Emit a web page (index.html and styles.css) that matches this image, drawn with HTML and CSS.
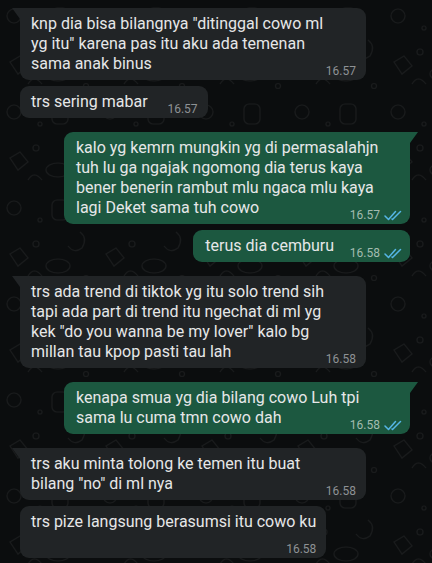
FILE: index.html
```html
<!DOCTYPE html>
<html lang="id">
<head>
<meta charset="utf-8">
<title>Chat</title>
<link rel="stylesheet" href="styles.css">
</head>
<body>
<div class="chat">
  <div class="msg in tail full">
    <span class="text">knp dia bisa bilangnya "ditinggal cowo ml<br>yg itu" karena pas itu aku ada temenan<br>sama anak binus</span><span class="spacer"></span>
    <span class="meta"><span class="time">16.57</span></span>
  </div>
  <div class="msg in">
    <span class="text">trs sering mabar</span><span class="spacer"></span>
    <span class="meta"><span class="time">16.57</span></span>
  </div>
  <div class="msg out tail full">
    <span class="text">kalo yg kemrn mungkin yg di permasalahjn<br>tuh lu ga ngajak ngomong dia terus kaya<br>bener benerin rambut mlu ngaca mlu kaya<br>lagi Deket sama tuh cowo</span><span class="spacer"></span>
    <span class="meta"><span class="time">16.57</span><svg class="ticks" viewBox="0 0 18 11" width="18" height="11"><path d="M1 6 L4.5 9.5 L11.5 1.5 M8 9 L8.5 9.5 L16.5 1.5"/></svg></span>
  </div>
  <div class="msg out">
    <span class="text">terus dia cemburu</span><span class="spacer"></span>
    <span class="meta"><span class="time">16.58</span><svg class="ticks" viewBox="0 0 18 11" width="18" height="11"><path d="M1 6 L4.5 9.5 L11.5 1.5 M8 9 L8.5 9.5 L16.5 1.5"/></svg></span>
  </div>
  <div class="msg in tail full">
    <span class="text">trs ada trend di tiktok yg itu solo trend sih<br>tapi ada part di trend itu ngechat di ml yg<br>kek "do you wanna be my lover" kalo bg<br>millan tau kpop pasti tau lah</span><span class="spacer"></span>
    <span class="meta"><span class="time">16.58</span></span>
  </div>
  <div class="msg out tail full">
    <span class="text">kenapa smua yg dia bilang cowo Luh tpi<br>sama lu cuma tmn cowo dah</span><span class="spacer"></span>
    <span class="meta"><span class="time">16.58</span><svg class="ticks" viewBox="0 0 18 11" width="18" height="11"><path d="M1 6 L4.5 9.5 L11.5 1.5 M8 9 L8.5 9.5 L16.5 1.5"/></svg></span>
  </div>
  <div class="msg in tail full">
    <span class="text">trs aku minta tolong ke temen itu buat<br>bilang "no" di ml nya</span><span class="spacer"></span>
    <span class="meta"><span class="time">16.58</span></span>
  </div>
  <div class="msg in">
    <span class="text">trs pize langsung berasumsi itu cowo ku</span><span class="spacer block"></span>
    <span class="meta"><span class="time">16.58</span></span>
  </div>
</div>
</body>
</html>
```
FILE: styles.css
```css
* { box-sizing: border-box; }

html, body {
  margin: 0;
  padding: 0;
}

body {
  width: 432px;
  height: 563px;
  overflow: hidden;
  background-color: #0b0d0e;
  background-image: url("data:image/svg+xml,%3Csvg xmlns='http://www.w3.org/2000/svg' width='96' height='96' viewBox='0 0 96 96'%3E%3Cg fill='none' stroke='%23ffffff' stroke-opacity='0.06' stroke-width='1.2'%3E%3Ccircle cx='14' cy='16' r='7'/%3E%3Crect x='52' y='8' width='16' height='20' rx='5'/%3E%3Cpath d='M80 40 q8 6 2 16 q-8 6 -14 -2'/%3E%3Ccircle cx='36' cy='52' r='3'/%3E%3Cpath d='M10 62 l10 -6 l8 10 l-10 8 z'/%3E%3Cellipse cx='58' cy='74' rx='12' ry='7'/%3E%3Ccircle cx='86' cy='86' r='2.5'/%3E%3Cpath d='M28 84 q6 -10 14 0'/%3E%3Ccircle cx='40' cy='28' r='2'/%3E%3C/g%3E%3C/svg%3E");
  background-size: 96px 96px;
  font-family: Roboto, "Noto Sans", "Liberation Sans", sans-serif;
}

.chat {
  display: flex;
  flex-direction: column;
  padding: 8px 22px 0 20px;
}

.msg {
  position: relative;
  max-width: 346px;
  padding: 6px 10px 6px 11px;
  border-radius: 9px;
  font-size: 16px;
  line-height: 20px;
  color: #e6e7e8;
}

.msg + .msg { margin-top: 6px; }
.msg.tail:not(:first-child) { margin-top: 14px; }

.in {
  align-self: flex-start;
  background: #212426;
}

.out {
  align-self: flex-end;
  background: #1c5840;
  padding-left: 12px;
}

.full { width: 346px; }

.in.tail { border-top-left-radius: 0; }
.out.tail { border-top-right-radius: 0; }

.in.tail::before {
  content: "";
  position: absolute;
  top: 0;
  left: -8px;
  width: 0;
  height: 0;
  border-top: 11px solid #212426;
  border-left: 8px solid transparent;
}

.out.tail::before {
  content: "";
  position: absolute;
  top: 0;
  right: -8px;
  width: 0;
  height: 0;
  border-top: 11px solid #1c5840;
  border-right: 8px solid transparent;
}

.spacer {
  display: inline-block;
  width: 50px;
  height: 1px;
}

.out .spacer { width: 66px; }

.spacer.block {
  display: block;
  height: 20px;
}

.meta {
  position: absolute;
  right: 10px;
  bottom: 2px;
  display: flex;
  align-items: center;
  gap: 4px;
  height: 14px;
  line-height: 14px;
  font-size: 12px;
}

.in .meta { color: #8e9295; }
.out .meta { color: #a3bcb0; right: 8px; }

.ticks {
  fill: none;
  stroke: #55b6e6;
  stroke-width: 1.5;
  stroke-linecap: round;
  stroke-linejoin: round;
}
```
